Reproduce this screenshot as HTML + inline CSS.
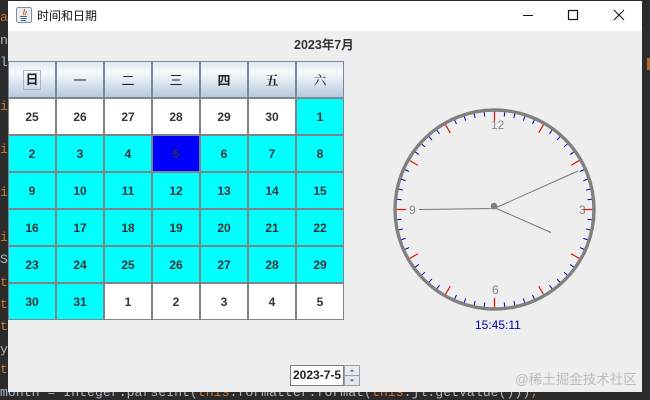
<!DOCTYPE html>
<html><head><meta charset="utf-8">
<style>
html,body{margin:0;padding:0;width:650px;height:400px;overflow:hidden;background:#2b2b2b}
body{position:relative;font-family:"Liberation Sans","Noto Sans CJK SC",sans-serif}
.abs{position:absolute}
.code{position:absolute;left:0;font:13.2px/16px "Liberation Mono",monospace;white-space:pre;color:#a9b7c6}
.o{color:#cc7832}
#win{position:absolute;left:8px;top:1px;width:634px;height:391px;background:#eee;overflow:hidden}
#grid{position:absolute;left:8px;top:61px;display:grid;grid-template-columns:repeat(7,48px);grid-template-rows:repeat(7,37px);font-weight:bold;font-size:12px;color:#333}
#grid div{box-sizing:border-box;border:1px solid #808488;display:flex;align-items:center;justify-content:center;background:#fff}
#grid .h{background:linear-gradient(#dde8f3,#f8fafc 28%,#b8cbdd);border-color:#7a8a99;color:#222;font-size:13px}
#grid .t{font-weight:normal}
#grid .f{font-family:"Noto Serif CJK SC",serif}
#grid .c{background:#0ff}
#grid .s{background:#00f}
</style></head><body>
<div class="code o" style="top:10px">a</div>
<div class="code" style="top:33px">n</div>
<div class="code" style="top:55px">l</div>
<div class="code o" style="top:99px">i</div>
<div class="code o" style="top:142px">i</div>
<div class="code o" style="top:185px">i</div>
<div class="code o" style="top:230px">i</div>
<div class="code" style="top:252px">S</div>
<div class="code o" style="top:275px">t</div>
<div class="code o" style="top:297px">t</div>
<div class="code o" style="top:319px">t</div>
<div class="code" style="top:342px">y</div>
<div class="code o" style="top:362px">t</div>
<div class="code" style="top:385px;color:#a9b7c6">month = Integer.parseInt(<span class="o">this</span>.formatter.format(<span class="o">this</span>.jl.getValue()))<span class="o">;</span></div>
<div class="abs" style="left:647px;top:58px;width:3px;height:12px;background:#a96a2e"></div>

<div id="win"></div>
<div class="abs" style="left:8px;top:1px;width:634px;height:30px;background:#fff"></div>

<svg class="abs" style="left:16px;top:7px" width="16" height="16" viewBox="0 0 16 16">
<rect x=".5" y=".5" width="15" height="15" rx="2" fill="#e9edf2" stroke="#7f8c9a"/>
<path d="M8 2C10 4 6 5 8 8M10.500 4C11 6 8.500 6 9.500 8" stroke="#d9722a" stroke-width="1.200" fill="none"/>
<path d="M4 9.500H11M4.500 11.500H10.500M5 13.500H10" stroke="#45688c" stroke-width="1.100" fill="none"/>
</svg>
<div class="abs" style="left:37px;top:8px;font-size:12px;line-height:16px;color:#111;white-space:nowrap">时间和日期</div>

<svg class="abs" style="left:515px;top:5px" width="120" height="22" fill="none" stroke="#111" stroke-width="1">
<path d="M8 10.500H18"/>
<rect x="53.500" y="5.500" width="9" height="9" stroke-width="1.200"/>
<path d="M99 5L109 15M109 5L99 15"/>
</svg>

<div class="abs" style="left:294px;top:38px;font-size:12.500px;font-weight:bold;line-height:15px;color:#333;white-space:nowrap">2023年7月</div>

<div id="grid">
<div class="h"><span style="outline:1px solid #a9b5c2;padding:2px 1px;line-height:14px">日</span></div><div class="h t">一</div><div class="h t">二</div><div class="h t">三</div><div class="h">四</div><div class="h f">五</div><div class="h t f">六</div>
<div>25</div><div>26</div><div>27</div><div>28</div><div>29</div><div>30</div><div class="c">1</div>
<div class="c">2</div><div class="c">3</div><div class="c">4</div><div class="s">5</div><div class="c">6</div><div class="c">7</div><div class="c">8</div>
<div class="c">9</div><div class="c">10</div><div class="c">11</div><div class="c">12</div><div class="c">13</div><div class="c">14</div><div class="c">15</div>
<div class="c">16</div><div class="c">17</div><div class="c">18</div><div class="c">19</div><div class="c">20</div><div class="c">21</div><div class="c">22</div>
<div class="c">23</div><div class="c">24</div><div class="c">25</div><div class="c">26</div><div class="c">27</div><div class="c">28</div><div class="c">29</div>
<div class="c">30</div><div class="c">31</div><div>1</div><div>2</div><div>3</div><div>4</div><div>5</div>
</div>

<svg class="abs" style="left:380px;top:95px" width="230" height="240" viewBox="380 95 230 240">
<defs>
<path id="b" d="M0-99V-93.500" stroke="#0000c0" stroke-width="1" fill="none"/>
<path id="r" d="M0-99V-88.500" stroke="#e01010" stroke-width="1.200" fill="none"/>
</defs>
<g transform="translate(494.500 209.500)">
<use href="#r"/><use href="#r" transform="rotate(30)"/><use href="#r" transform="rotate(60)"/><use href="#r" transform="rotate(90)"/><use href="#r" transform="rotate(120)"/><use href="#r" transform="rotate(150)"/><use href="#r" transform="rotate(180)"/><use href="#r" transform="rotate(210)"/><use href="#r" transform="rotate(240)"/><use href="#r" transform="rotate(270)"/><use href="#r" transform="rotate(300)"/><use href="#r" transform="rotate(330)"/>
<use href="#b" transform="rotate(6)"/><use href="#b" transform="rotate(12)"/><use href="#b" transform="rotate(18)"/><use href="#b" transform="rotate(24)"/>
<use href="#b" transform="rotate(36)"/><use href="#b" transform="rotate(42)"/><use href="#b" transform="rotate(48)"/><use href="#b" transform="rotate(54)"/>
<use href="#b" transform="rotate(66)"/><use href="#b" transform="rotate(72)"/><use href="#b" transform="rotate(78)"/><use href="#b" transform="rotate(84)"/>
<use href="#b" transform="rotate(96)"/><use href="#b" transform="rotate(102)"/><use href="#b" transform="rotate(108)"/><use href="#b" transform="rotate(114)"/>
<use href="#b" transform="rotate(126)"/><use href="#b" transform="rotate(132)"/><use href="#b" transform="rotate(138)"/><use href="#b" transform="rotate(144)"/>
<use href="#b" transform="rotate(156)"/><use href="#b" transform="rotate(162)"/><use href="#b" transform="rotate(168)"/><use href="#b" transform="rotate(174)"/>
<use href="#b" transform="rotate(186)"/><use href="#b" transform="rotate(192)"/><use href="#b" transform="rotate(198)"/><use href="#b" transform="rotate(204)"/>
<use href="#b" transform="rotate(216)"/><use href="#b" transform="rotate(222)"/><use href="#b" transform="rotate(228)"/><use href="#b" transform="rotate(234)"/>
<use href="#b" transform="rotate(246)"/><use href="#b" transform="rotate(252)"/><use href="#b" transform="rotate(258)"/><use href="#b" transform="rotate(264)"/>
<use href="#b" transform="rotate(276)"/><use href="#b" transform="rotate(282)"/><use href="#b" transform="rotate(288)"/><use href="#b" transform="rotate(294)"/>
<use href="#b" transform="rotate(306)"/><use href="#b" transform="rotate(312)"/><use href="#b" transform="rotate(318)"/><use href="#b" transform="rotate(324)"/>
<use href="#b" transform="rotate(336)"/><use href="#b" transform="rotate(342)"/><use href="#b" transform="rotate(348)"/><use href="#b" transform="rotate(354)"/>
</g>
<circle cx="494.500" cy="209.500" r="99.500" fill="none" stroke="#808080" stroke-width="3.400"/>
<path d="M494 208.500L419 209.500M494 208.500L578 171M494 207.500L551 232.500" stroke="#777" stroke-width="1" fill="none"/>
<circle cx="494" cy="206" r="3.300" fill="#808080"/>
<g font-family="Liberation Sans,sans-serif" font-size="12" fill="#888">
<text x="491" y="129">12</text>
<text x="409" y="214">9</text>
<text x="579" y="214">3</text>
<text x="492" y="294">6</text>
</g>
<text x="475" y="329" font-family="Liberation Sans,sans-serif" font-size="12" fill="#0000b0">15:45:11</text>
</svg>

<div class="abs" style="left:290px;top:365px;box-sizing:border-box;width:54px;height:21px;background:#fff;border:1px solid #808080;font-size:12px;font-weight:bold;line-height:19px;color:#222;padding-left:2px;white-space:nowrap">2023-7-5</div>
<svg class="abs" style="left:344px;top:365px" width="16" height="21">
<rect x=".5" y=".5" width="15" height="10" fill="#e4eaf0" stroke="#9aa0a6"/>
<rect x=".5" y="10.500" width="15" height="10" fill="#dfe6ed" stroke="#9aa0a6"/>
<path d="M6 6.500L8 4.500L10 6.500Z" fill="#555"/>
<path d="M6 14.500L8 16.500L10 14.500Z" fill="#555"/>
</svg>

<div class="abs" style="left:515px;top:371px;font-size:13.500px;line-height:18px;color:#bdbdbd;white-space:nowrap">@稀土掘金技术社区</div>
</body></html>
